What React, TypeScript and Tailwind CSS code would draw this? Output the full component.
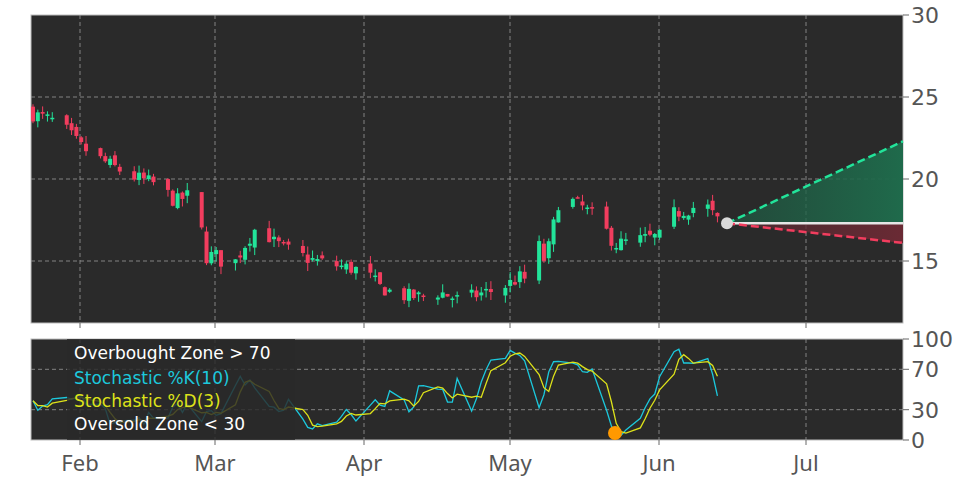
import React from "react";

const W = 872;
const H1 = 308;
const H2 = 101;
const gridX = [49, 184, 333, 479, 628, 775];
const py = (p: number) => (30 - p) * 16.4;
const sy = (v: number) => H2 - v * 1.01;

function interp(pts: number[][], x: number) {
  for (let i = 0; i < pts.length - 1; i++) {
    const [x0, y0] = pts[i];
    const [x1, y1] = pts[i + 1];
    if (x >= x0 && x <= x1) return y0 + ((y1 - y0) * (x - x0)) / (x1 - x0 || 1);
  }
  return pts[pts.length - 1][1];
}

let seed = 7;
const rnd = () => {
  seed = (seed * 16807) % 2147483647;
  return seed / 2147483647;
};

const pricePts = [
  [31, 24], [50, 23.6], [60, 23.4], [80, 22], [100, 21.2], [130, 20.2], [160, 19.6], [175, 18.6],
  [195, 19.2], [200, 18], [204, 15.2], [215, 15.4], [230, 14.4], [245, 16], [260, 17.4], [272, 16.2],
  [290, 15.6], [310, 15.1], [330, 14.8], [364, 14.4], [380, 13.4], [400, 12.9], [420, 12.8], [440, 13.1],
  [460, 12.6], [480, 13], [500, 13.3], [520, 14], [533, 13.7], [540, 16.2], [545, 14.8], [560, 19],
  [580, 18.4], [600, 17.4], [615, 16], [630, 16.2], [660, 16.5], [670, 17.8], [690, 18.2], [705, 18.5], [718, 17.4],
];

const kPts = [
  [31, 40], [38, 30], [50, 38], [60, 50], [70, 45], [80, 48], [90, 30], [100, 40], [110, 20], [120, 25],
  [135, 15], [150, 25], [165, 20], [180, 35], [200, 20], [210, 30], [225, 30], [240, 60], [250, 55],
  [260, 40], [270, 35], [280, 30], [295, 40], [305, 10], [320, 12], [330, 5], [345, 25], [360, 20],
  [368, 5], [372, 50], [380, 30], [390, 45], [395, 15], [405, 40], [410, 20], [420, 55], [430, 40],
  [440, 60], [450, 35], [460, 70], [470, 20], [480, 50], [490, 75], [500, 80], [510, 88], [520, 85],
  [530, 70], [540, 25], [550, 75], [560, 82], [570, 75], [580, 70], [590, 70], [600, 65], [610, 10],
  [615, 5], [625, 8], [640, 20], [655, 50], [665, 85], [678, 95], [685, 70], [695, 75], [705, 90],
  [712, 70], [717, 45],
];

// trading days: calendar spacing 4.82px, skip weekends
const days: number[] = [];
for (let d = 0, x = 33; x <= 718; d++, x += 4.82) {
  if (d % 7 !== 5 && d % 7 !== 6) days.push(x);
}

const candles = (() => {
  let prev = 24.2;
  return days.map((x) => {
    const c = interp(pricePts, x) + (rnd() - 0.5) * 0.9;
    const o = prev + (rnd() - 0.5) * 0.5;
    const hi = Math.max(o, c) + rnd() * 0.5;
    const lo = Math.min(o, c) - rnd() * 0.5;
    prev = c;
    return { x: x - 31, o, c, hi, lo };
  });
})();

const kVals = days.map((x) => Math.max(0, Math.min(100, interp(kPts, x) + (rnd() - 0.5) * 12)));
const dVals = kVals.map((_, i) => {
  const s = kVals.slice(Math.max(0, i - 2), i + 1);
  return s.reduce((a, b) => a + b, 0) / s.length;
});
const line = (vals: number[]) => vals.map((v, i) => `${days[i] - 31},${sy(v)}`).join(" ");

const lastX = 727 - 31;
const lastY = py(17.3);

function PriceChart() {
  return (
    <svg width={941} height={H1} className="overflow-visible block">
      <defs>
        <linearGradient id="gup" x1="0" y1="0" x2="1" y2="0">
          <stop offset="0" stopColor="#1f5e45" stopOpacity="0.6" />
          <stop offset="1" stopColor="#1f6a4b" />
        </linearGradient>
        <linearGradient id="gdn" x1="0" y1="0" x2="1" y2="0">
          <stop offset="0" stopColor="#5a2a32" stopOpacity="0.6" />
          <stop offset="1" stopColor="#6a2a34" />
        </linearGradient>
      </defs>
      <rect width={W} height={H1} fill="#2a2a2a" stroke="#bdbdbd" />
      {gridX.map((x) => (
        <line key={x} x1={x} x2={x} y1={0} y2={H1} stroke="#9a9a9a" strokeDasharray="4 3" strokeWidth={0.8} />
      ))}
      {[25, 20, 15].map((p) => (
        <line key={p} x1={0} x2={W} y1={py(p)} y2={py(p)} stroke="#9a9a9a" strokeDasharray="4 3" strokeWidth={0.8} />
      ))}
      <polygon points={`${lastX},${lastY} ${W},${py(22.3)} ${W},${lastY}`} fill="url(#gup)" />
      <polygon points={`${lastX},${lastY} ${W},${lastY} ${W},${py(16.1)}`} fill="url(#gdn)" />
      {candles.map((c, i) => {
        const up = c.c >= c.o;
        const col = up ? "#22e49a" : "#f23d5e";
        return (
          <g key={i}>
            <line x1={c.x} x2={c.x} y1={py(c.hi)} y2={py(c.lo)} stroke={col} strokeWidth={1} />
            <rect x={c.x - 2} width={4} y={py(Math.max(c.o, c.c))} height={Math.max(1.5, Math.abs(py(c.o) - py(c.c)))} fill={col} />
          </g>
        );
      })}
      <line x1={lastX} x2={W} y1={lastY} y2={lastY} stroke="#e6e6e6" strokeWidth={2.5} />
      <line x1={lastX} y1={lastY} x2={W} y2={py(22.3)} stroke="#22e49a" strokeWidth={2.5} strokeDasharray="8 4" />
      <line x1={lastX} y1={lastY} x2={W} y2={py(16.1)} stroke="#f23d5e" strokeWidth={2.5} strokeDasharray="8 4" />
      <circle cx={lastX} cy={lastY} r={6} fill="#d9d9d9" />
      {[30, 25, 20, 15].map((p) => (
        <g key={p}>
          <line x1={W} x2={W + 6} y1={py(p)} y2={py(p)} stroke="#666" />
          <text x={W + 3} y={py(p) + 8} fill="#555" fontSize={22} fontFamily="DejaVu Sans, sans-serif" dx={5}>
            {p}
          </text>
        </g>
      ))}
      {gridX.map((x) => (
        <line key={"t" + x} x1={x} x2={x} y1={H1} y2={H1 + 5} stroke="#666" />
      ))}
    </svg>
  );
}

function StochChart() {
  return (
    <svg width={941} height={H2} className="overflow-visible block">
      <rect width={W} height={H2} fill="#2a2a2a" stroke="#bdbdbd" />
      {gridX.map((x) => (
        <line key={x} x1={x} x2={x} y1={0} y2={H2} stroke="#9a9a9a" strokeDasharray="4 3" strokeWidth={0.8} />
      ))}
      {[70, 30].map((v) => (
        <line key={v} x1={0} x2={W} y1={sy(v)} y2={sy(v)} stroke="#9a9a9a" strokeDasharray="4 3" strokeWidth={0.8} />
      ))}
      <polyline points={line(kVals)} fill="none" stroke="#1cc8dc" strokeWidth={1.3} />
      <polyline points={line(dVals)} fill="none" stroke="#dde21a" strokeWidth={1.3} />
      <circle cx={615 - 31} cy={sy(7)} r={7} fill="#ff9900" />
      <rect x={36} y={0} width={228} height={H2} fill="#2a2a2a" opacity={0.82} />
      <g fontFamily="DejaVu Sans, sans-serif" fontSize={17}>
        <text x={43} y={20} fill="#ffffff">Overbought Zone &gt; 70</text>
        <text x={43} y={45} fill="#1cc8dc">Stochastic %K(10)</text>
        <text x={43} y={68} fill="#dde21a">Stochastic %D(3)</text>
        <text x={43} y={91} fill="#ffffff">Oversold Zone &lt; 30</text>
      </g>
      {[100, 70, 30, 0].map((v) => (
        <g key={v}>
          <line x1={W} x2={W + 6} y1={sy(v)} y2={sy(v)} stroke="#666" />
          <text x={W + 8} y={sy(v) + 8} fill="#555" fontSize={22} fontFamily="DejaVu Sans, sans-serif">
            {v}
          </text>
        </g>
      ))}
      {gridX.map((x) => (
        <line key={"t" + x} x1={x} x2={x} y1={H2} y2={H2 + 5} stroke="#666" />
      ))}
    </svg>
  );
}

export default function App() {
  const months = ["Feb", "Mar", "Apr", "May", "Jun", "Jul"];
  return (
    <div className="w-[972px] h-[486px] bg-white pt-[15px] pl-[31px] flex flex-col overflow-hidden">
      <PriceChart />
      <div className="mt-[16px]">
        <StochChart />
      </div>
      <div className="relative h-[40px] w-[872px] text-[22px] text-[#555] font-['DejaVu_Sans',sans-serif]">
        {months.map((m, i) => (
          <span key={m} className="absolute top-[6px] -translate-x-1/2" style={{ left: gridX[i] }}>
            {m}
          </span>
        ))}
      </div>
    </div>
  );
}
